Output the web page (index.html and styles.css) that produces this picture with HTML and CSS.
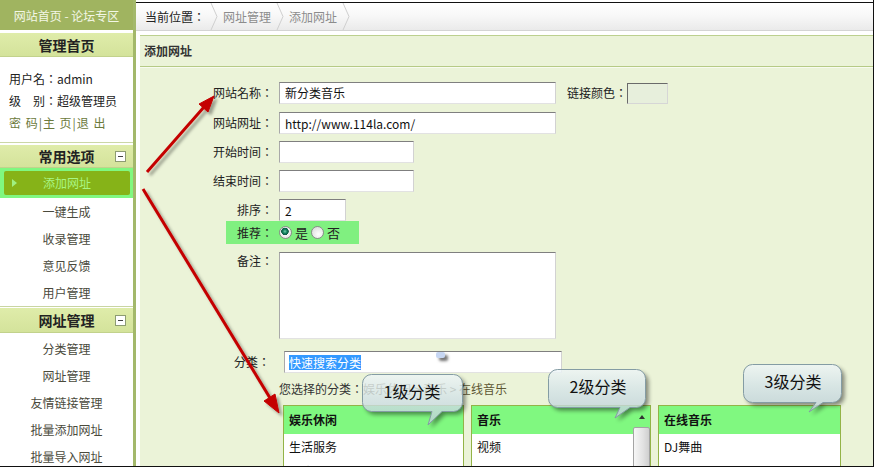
FILE: index.html
```html
<!DOCTYPE html>
<html lang="zh-CN">

<head>
    <meta charset="UTF-8">
    <title>添加网址 - 管理后台</title>
    <link rel="stylesheet" href="styles.css">
</head>

<body>
    <div class="frame">
        <aside class="side">
            <div class="side-title">网站首页 - 论坛专区</div>
            <div class="side-head first"><span class="head-text">管理首页</span></div>
            <div class="side-user">
                <p lang="ja">用户名：admin</p>
                <p lang="ja">级　别：超级管理员</p>
                <p class="links">密 码|主 页|退 出</p>
            </div>
            <div class="side-head"><span class="head-text">常用选项</span><span class="fold"></span></div>
            <ul class="side-menu">
                <li class="on"><span>添加网址</span></li>
                <li>一键生成</li>
                <li>收录管理</li>
                <li>意见反馈</li>
                <li>用户管理</li>
            </ul>
            <div class="side-head second"><span class="head-text">网址管理</span><span class="fold"></span></div>
            <ul class="side-menu menu-2">
                <li>分类管理</li>
                <li>网址管理</li>
                <li>友情链接管理</li>
                <li>批量添加网址</li>
                <li>批量导入网址</li>
            </ul>
        </aside>

        <main class="main">
            <div class="crumb">
                <span class="crumb-here" lang="ja">当前位置：</span>
                <svg class="chev" width="8" height="27" viewBox="0 0 8 27"><polyline points="1,0 7,13.5 1,27" fill="none" stroke="#cfcfcf" /></svg>
                <span>网址管理</span>
                <svg class="chev" width="8" height="27" viewBox="0 0 8 27"><polyline points="1,0 7,13.5 1,27" fill="none" stroke="#cfcfcf" /></svg>
                <span>添加网址</span>
                <svg class="chev" width="8" height="27" viewBox="0 0 8 27"><polyline points="1,0 7,13.5 1,27" fill="none" stroke="#cfcfcf" /></svg>
            </div>

            <div class="panel">
                <div class="panel-title">添加网址</div>
                <form class="form">
                    <div class="row r1">
                        <label class="lab" lang="ja">网站名称：</label>
                        <input class="txt wide" type="text" value="新分类音乐">
                        <label class="lab-color" lang="ja">链接颜色：</label>
                        <input class="txt color" type="text" value="">
                    </div>
                    <div class="row r2">
                        <label class="lab" lang="ja">网站网址：</label>
                        <input class="txt wide" type="text" value="http://www.114la.com/">
                    </div>
                    <div class="row r3">
                        <label class="lab" lang="ja">开始时间：</label>
                        <input class="txt mid" type="text" value="">
                    </div>
                    <div class="row r4">
                        <label class="lab" lang="ja">结束时间：</label>
                        <input class="txt mid" type="text" value="">
                    </div>
                    <div class="row r5">
                        <label class="lab" lang="ja">排序：</label>
                        <input class="txt short" type="text" value="2">
                    </div>
                    <div class="row r6">
                        <div class="hl">
                            <label class="lab lab-hl" lang="ja">推荐：</label>
                            <span class="radio checked"></span><span class="opt">是</span>
                            <span class="radio"></span><span class="opt">否</span>
                        </div>
                    </div>
                    <div class="row r7">
                        <label class="lab lab-top" lang="ja">备注：</label>
                        <textarea class="memo"></textarea>
                    </div>
                    <div class="row r8">
                        <label class="lab lab-cat" lang="ja">分类：</label>
                        <div class="txt search"><span class="sel">快速搜索分类</span></div>
                    </div>
                    <div class="row r9">
                        <span class="picked" lang="ja">您选择的分类：</span><span class="path">娱乐休闲 &gt; 音乐 &gt; 在线音乐</span>
                    </div>
                    <div class="row r10">
                        <div class="box b1">
                            <div class="box-head">娱乐休闲</div>
                            <div class="box-item">生活服务</div>
                            <div class="box-item">网络游戏</div>
                        </div>
                        <div class="box b2">
                            <div class="box-head">音乐</div>
                            <div class="box-item">视频</div>
                            <div class="box-item">游戏</div>
                            <div class="scroll"><span class="up"></span><span class="thumb"></span></div>
                        </div>
                        <div class="box b3">
                            <div class="box-head">在线音乐</div>
                            <div class="box-item">DJ舞曲</div>
                            <div class="box-item">音乐电台</div>
                        </div>
                    </div>
                </form>
            </div>
        </main>

        <!-- annotation layer: arrows, bubbles -->
        <svg class="arrows" width="881" height="469" viewBox="0 0 881 469">
            <defs>
                <filter id="ashadow" x="-20%" y="-20%" width="140%" height="140%">
                    <feDropShadow dx="3" dy="3" stdDeviation="1.6" flood-color="#000" flood-opacity="0.35" />
                </filter>
                <linearGradient id="bfill" x1="0" y1="0" x2="0" y2="1">
                    <stop offset="0" stop-color="#eef5f7" />
                    <stop offset="0.45" stop-color="#d3e2e7" />
                    <stop offset="1" stop-color="#bacdd5" />
                </linearGradient>
                <filter id="bblur" x="-20%" y="-20%" width="140%" height="160%">
                    <feGaussianBlur stdDeviation="2" />
                </filter>
            </defs>
            <g filter="url(#ashadow)" fill="#c40000" stroke="#c40000">
                <line x1="147" y1="172" x2="204" y2="107" stroke-width="3" />
                <polygon points="214,96 208,112 199,104" stroke-width="1" />
                <line x1="143" y1="189" x2="270" y2="398" stroke-width="3" />
                <polygon points="279,413 275,394 264,401" stroke-width="1" />
            </g>
        </svg>

        <span class="cursor"></span>

        <div class="bubble bub1">
            <svg width="110" height="60" viewBox="0 0 110 60">
                <defs>
                    <path id="p1" d="M9.5,0.5 H91.5 A9 9 0 0 1 100.5,9.5 V28.5 A9 9 0 0 1 91.5,37.5 H80 L66,51 L70,37.5 H9.5 A9 9 0 0 1 0.5,28.5 V9.5 A9 9 0 0 1 9.5,0.5 Z" />
                    <mask id="m1"><rect width="110" height="60" fill="#fff" /><use href="#p1" fill="#000" /></mask>
                </defs>
                <g mask="url(#m1)"><use href="#p1" fill="#000" opacity="0.45" filter="url(#bblur)" transform="translate(3,3)" /></g>
                <use href="#p1" fill="url(#bfill)" fill-opacity="0.8" stroke="#849ca4" />
            </svg>
            <span class="bubble-text">1级分类</span>
        </div>
        <div class="bubble bub2">
            <svg width="110" height="60" viewBox="0 0 110 60">
                <defs>
                    <path id="p2" d="M9.5,0.5 H88.5 A9 9 0 0 1 97.5,9.5 V29.5 A9 9 0 0 1 88.5,38.5 H82 L67,49 L72,38.5 H9.5 A9 9 0 0 1 0.5,29.5 V9.5 A9 9 0 0 1 9.5,0.5 Z" />
                    <mask id="m2"><rect width="110" height="60" fill="#fff" /><use href="#p2" fill="#000" /></mask>
                </defs>
                <g mask="url(#m2)"><use href="#p2" fill="#000" opacity="0.45" filter="url(#bblur)" transform="translate(3,3)" /></g>
                <use href="#p2" fill="url(#bfill)" fill-opacity="0.8" stroke="#849ca4" />
            </svg>
            <span class="bubble-text">2级分类</span>
        </div>
        <div class="bubble bub3">
            <svg width="110" height="60" viewBox="0 0 110 60">
                <defs>
                    <path id="p3" d="M9.5,0.5 H89.5 A9 9 0 0 1 98.5,9.5 V29.5 A9 9 0 0 1 89.5,38.5 H80 L66,48 L73,38.5 H9.5 A9 9 0 0 1 0.5,29.5 V9.5 A9 9 0 0 1 9.5,0.5 Z" />
                    <mask id="m3"><rect width="110" height="60" fill="#fff" /><use href="#p3" fill="#000" /></mask>
                </defs>
                <g mask="url(#m3)"><use href="#p3" fill="#000" opacity="0.45" filter="url(#bblur)" transform="translate(3,3)" /></g>
                <use href="#p3" fill="url(#bfill)" fill-opacity="0.8" stroke="#849ca4" />
            </svg>
            <span class="bubble-text">3级分类</span>
        </div>
    </div>
</body>

</html>
```

FILE: styles.css
```css
* {
    box-sizing: border-box;
}

body {
    margin: 0;
    background: #fff;
    font-family: "Noto Sans CJK SC", "Liberation Sans", sans-serif;
    font-size: 12px;
    color: #222;
}

/* labels ending in a full-width colon: JP face keeps the colon centred */
.lab,
.lab-color,
.crumb-here,
.side-user p,
.picked {
    font-family: "Noto Sans CJK JP", "Noto Sans CJK SC", sans-serif;
}

.frame {
    position: relative;
    display: flex;
    width: 874px;
    height: 467px;
    border-right: 1px solid #111;
    border-bottom: 1px solid #111;
    overflow: hidden;
}

/* left menu */
.side {
    width: 136px;
    flex: none;
    border-right: 3px solid #a3b86b;
    background: #fff;
}

.side-title {
    height: 30px;
    line-height: 31px;
    background: #a0b460;
    color: #f3f7e6;
    text-align: center;
}

.side-head {
    display: grid;
    grid-template-columns: 1fr auto 1fr;
    align-items: center;
    height: 23px;
    margin-top: 2px;
    background: linear-gradient(#dfecaa, #d4e39b);
    border-bottom: 1px solid #c2d28c;
    font-size: 14px;
    font-weight: bold;
    color: #222;
}

.side-head.first {
    height: 24px;
    margin-top: 3px;
}

.side-head.second {
    height: 25px;
    margin-top: 1px;
}

.head-text {
    grid-column: 2;
    line-height: 20px;
}

.fold {
    grid-column: 3;
    justify-self: end;
    width: 11px;
    height: 11px;
    margin-right: 7px;
    background: #fff linear-gradient(#444, #444) no-repeat center / 5px 1px;
    border: 1px solid #8d9c72;
}

.side-user {
    height: 86px;
    padding: 11px 0 0 9px;
    border-bottom: 1px solid #cbd7a6;
}

.side-user p {
    margin: 0;
    line-height: 22px;
    color: #222;
}

.side-user .links {
    color: #6c7a3c;
    letter-spacing: 1px;
}

.side-menu {
    list-style: none;
    margin: 0;
    padding: 0;
    border-bottom: 1px solid #c9d5a2;
}

.side-menu li {
    height: 27px;
    line-height: 27px;
    text-align: center;
    color: #4a4a3c;
}

.side-menu li.on {
    height: 30px;
    padding: 3px 3px 3px 4px;
    background: #80f880;
}

.side-menu li.on span {
    position: relative;
    display: block;
    height: 24px;
    line-height: 24px;
    border-radius: 2px;
    background: #86b318;
    color: #a8f684;
}

.side-menu li.on span::before {
    content: "";
    position: absolute;
    left: 8px;
    top: 8px;
    border-left: 5px solid #a0f080;
    border-top: 4px solid transparent;
    border-bottom: 4px solid transparent;
}

.menu-2 {
    padding-top: 2px;
    border-bottom: 0;
}

/* right side */
.main {
    flex: 1;
    margin-top: 2px;
    border-top: 1px solid #111;
    display: flex;
    flex-direction: column;
}

.crumb {
    display: flex;
    align-items: center;
    height: 28px;
    padding-left: 9px;
    border-bottom: 1px solid #d4d4d4;
    background: linear-gradient(#fff, #f7f7f7 50%, #eaeaea);
    color: #8c8c8c;
}

.crumb-here {
    color: #222;
}

.chev {
    margin: 0 5px;
}

.panel {
    flex: 1;
    margin: 4px 0 0 4px;
    background: #ebf3d8;
    border-top: 1px solid #bcd08e;
}

.panel-title {
    height: 31px;
    line-height: 30px;
    padding-left: 4px;
    border-bottom: 1px solid #b6ca86;
    box-shadow: 0 1px 0 #f7fbef;
    font-weight: bold;
    color: #333;
}

.form {
    padding-top: 14px;
    margin: 0;
}

.row {
    display: flex;
    align-items: center;
}

.lab {
    width: 133px;
    flex: none;
    text-align: right;
    line-height: 22px;
    color: #222;
}

.txt {
    height: 22px;
    margin: 0 0 0 6px;
    padding: 0 5px;
    border: 1px solid;
    border-color: #7f7f7f #d2d2d2 #e2e2e2 #a9a9a9;
    background: #fff;
    font-family: "Noto Sans CJK SC", "Liberation Sans", sans-serif;
    font-size: 12px;
    color: #111;
    outline: none;
}

.wide {
    width: 277px;
}

.mid {
    width: 135px;
}

.short {
    width: 67px;
}

.lab-color {
    margin-left: 11px;
    line-height: 22px;
}

.txt.color {
    width: 41px;
    height: 21px;
    margin: 2px 0 0 0;
    align-self: flex-start;
    background: #e7efdc;
    border-color: #6a6a6a #d6d6d6 #d6d6d6 #6a6a6a;
}

.r1 {
    margin-bottom: 8px;
}

.r2,
.r3,
.r4 {
    margin-bottom: 7px;
}

.r6 {
    margin-bottom: 8px;
}

.hl {
    display: flex;
    align-items: center;
    height: 23px;
    margin-left: 86px;
    padding-right: 19px;
    background: #80f080;
}

.lab-hl {
    width: 47px;
}

.radio {
    width: 13px;
    height: 13px;
    margin-left: 6px;
    border: 1px solid #8a8a8a;
    border-radius: 50%;
    background: radial-gradient(circle at 60% 65%, #fff, #d6d6d6);
}

.radio.checked {
    background: radial-gradient(circle at 45% 40%, #6fd0a8 0, #138060 2px, #0e5a44 3.5px, #f4f4f4 4px, #d8d8d8 100%);
}

.opt {
    margin-left: 3px;
    font-size: 13px;
    line-height: 22px;
}

.radio + .opt + .radio {
    margin-left: 3px;
}

.r7 {
    align-items: flex-start;
    margin-bottom: 12px;
}

.lab-top {
    line-height: 18px;
}

.memo {
    width: 277px;
    height: 87px;
    margin-left: 6px;
    border: 1px solid;
    border-color: #7f7f7f #d2d2d2 #e2e2e2 #a9a9a9;
    resize: none;
    outline: none;
}

.r8 {
    margin-bottom: 6px;
}

.lab-cat {
    width: 130px;
}

.txt.search {
    width: 278px;
    margin-left: 14px;
    padding-left: 4px;
    display: flex;
    align-items: center;
}

.sel {
    height: 15px;
    line-height: 15px;
    background: #3399ff;
    color: #fff;
}

.r9 {
    height: 20px;
    margin: 0 0 6px 139px;
    line-height: 20px;
    color: #333;
}

.path {
    color: #5c5632;
}

.r10 {
    align-items: flex-start;
    gap: 7px;
    margin-left: 143px;
}

.box {
    position: relative;
    height: 110px;
    border: 1px solid #93b347;
    background: #fff;
}

.b1 {
    width: 181px;
}

.b2 {
    width: 180px;
}

.b3 {
    width: 183px;
}

.box-head {
    height: 28px;
    line-height: 28px;
    padding-left: 5px;
    background: #80f880;
    font-weight: bold;
    color: #111;
}

.box-item {
    height: 25px;
    line-height: 25px;
    padding-left: 5px;
    color: #111;
}

/* listbox scrollbar, sits over the options */
.scroll {
    position: absolute;
    top: 0;
    right: 0;
    bottom: 0;
    width: 17px;
    display: flex;
    flex-direction: column;
    align-items: center;
}

.up {
    margin-top: 9px;
    border-bottom: 4px solid #333;
    border-left: 3px solid transparent;
    border-right: 3px solid transparent;
}

.thumb {
    width: 17px;
    flex: 1;
    margin-top: 8px;
    border: 1px solid #a4a4a4;
    border-radius: 2px;
    background: linear-gradient(to right, #f6f6f6, #e2e2e2 60%, #cfcfcf);
}

/* annotations */
.arrows {
    position: absolute;
    left: 0;
    top: 0;
    pointer-events: none;
}

.cursor {
    position: absolute;
    left: 436px;
    top: 352px;
    width: 9px;
    height: 6px;
    border-radius: 2px;
    background: #c6d6f2;
    box-shadow: 3px 3px 3px rgba(0, 0, 0, 0.55);
}

.bubble {
    position: absolute;
}

.bubble svg {
    display: block;
}

.bubble-text {
    position: absolute;
    left: 0;
    top: 0;
    width: 100px;
    height: 34px;
    line-height: 34px;
    text-align: center;
    font-size: 16px;
    color: #111;
}

.bub1 {
    left: 362px;
    top: 374px;
}

.bub2 {
    left: 548px;
    top: 369px;
}

.bub3 {
    left: 743px;
    top: 364px;
}
```
